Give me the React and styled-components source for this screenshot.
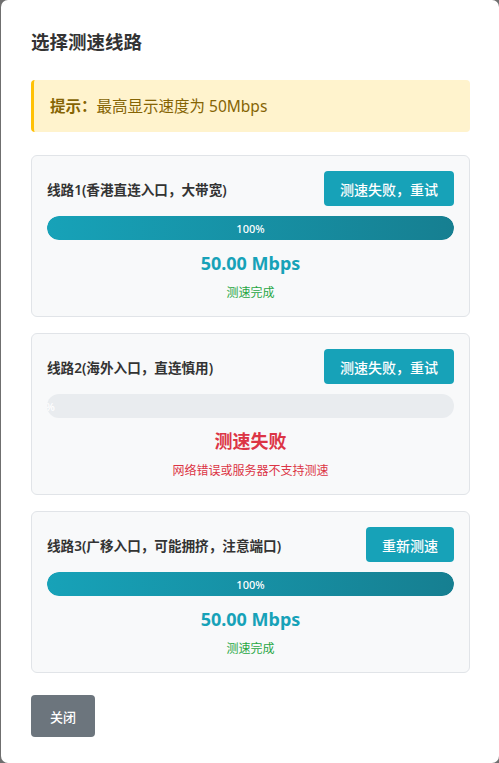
import React from "react";
import styled, { createGlobalStyle } from "styled-components";

const GlobalStyle = createGlobalStyle`
  * {
    box-sizing: border-box;
  }
  body {
    margin: 0;
    background: #6f6f6f;
    font-family: "Noto Sans", "Noto Sans CJK SC", sans-serif;
  }
`;

const Modal = styled.div`
  margin-left: 1px;
  width: 498px;
  height: 763px;
  background: #fff;
  border-radius: 7px;
  padding: 30px 29px 0 30px;
  color: #333;
`;

const Title = styled.h2`
  margin: 0;
  font-size: 18.5px;
  line-height: 24px;
  font-weight: 700;
  color: #333;
`;

const Alert = styled.div`
  margin-top: 26px;
  padding: 15px 16px;
  line-height: 22px;
  font-size: 15.5px;
  background: #fff3cd;
  color: #856404;
  border-left: 3px solid #ffc107;
  border-radius: 4px;

  > strong {
    font-weight: 700;
  }
`;

const CardList = styled.div`
  margin-top: 23px;
  display: flex;
  flex-direction: column;
  gap: 16px;
`;

const Card = styled.div`
  background: #f8f9fa;
  border: 1px solid #e1e4e8;
  border-radius: 6px;
  padding: 15px;
`;

const CardHead = styled.div`
  display: flex;
  align-items: center;
  justify-content: space-between;
`;

const LineName = styled.span`
  font-size: 13.6px;
  font-weight: 600;
  color: #333;
`;

const Button = styled.button`
  border: none;
  height: ${props => (props.tall ? "42px" : "35px")};
  padding: 0 ${props => (props.tall ? "19px" : "16px")};
  border-radius: 4px;
  font-family: inherit;
  font-size: ${props => (props.tall ? "13px" : "14px")};
  font-weight: 500;
  color: #fff;
  background: ${props => props.bg || "#17a2b8"};
  cursor: pointer;
`;

const Track = styled.div`
  margin-top: 10px;
  height: 24px;
  border-radius: 12px;
  background: #e9ecef;
  overflow: hidden;
`;

const Fill = styled.div`
  height: 100%;
  display: flex;
  align-items: center;
  justify-content: center;
  background: linear-gradient(90deg, #17a2b8, #167f91);
  border-radius: 12px;
  color: #fff;
  font-size: 11px;
  font-weight: 500;
  white-space: nowrap;
`;

const Result = styled.div`
  margin-top: 11px;
  text-align: center;
  font-size: 18px;
  line-height: 24px;
  font-weight: 700;
  color: ${props => (props.failed ? "#dc3545" : "#17a2b8")};
`;

const Status = styled.div`
  margin-top: 10px;
  text-align: center;
  font-size: 12px;
  line-height: 16px;
  color: ${props => (props.failed ? "#dc3545" : "#28a745")};
`;

const Footer = styled.div`
  margin-top: 22px;
  display: flex;
`;

const lines = [
  { name: "线路1(香港直连入口，大带宽)", action: "测速失败，重试", percent: 100, speed: "50.00 Mbps", status: "测速完成" },
  { name: "线路2(海外入口，直连慎用)", action: "测速失败，重试", percent: 0, failed: true, speed: "测速失败", status: "网络错误或服务器不支持测速" },
  { name: "线路3(广移入口，可能拥挤，注意端口)", action: "重新测速", percent: 100, speed: "50.00 Mbps", status: "测速完成" }
];

export default function App() {
  return (
    <>
      <GlobalStyle />
      <Modal>
        <Title>选择测速线路</Title>
        <Alert>
          <strong>提示：</strong>最高显示速度为 50Mbps
        </Alert>
        <CardList>
          {lines.map((line, idx) => (
            <Card key={idx}>
              <CardHead>
                <LineName>{line.name}</LineName>
                <Button>{line.action}</Button>
              </CardHead>
              <Track>
                <Fill style={{ width: `${line.percent}%` }}>{line.percent}%</Fill>
              </Track>
              <Result failed={line.failed}>{line.speed}</Result>
              <Status failed={line.failed}>{line.status}</Status>
            </Card>
          ))}
        </CardList>
        <Footer>
          <Button tall bg="#6c757d">关闭</Button>
        </Footer>
      </Modal>
    </>
  );
}
